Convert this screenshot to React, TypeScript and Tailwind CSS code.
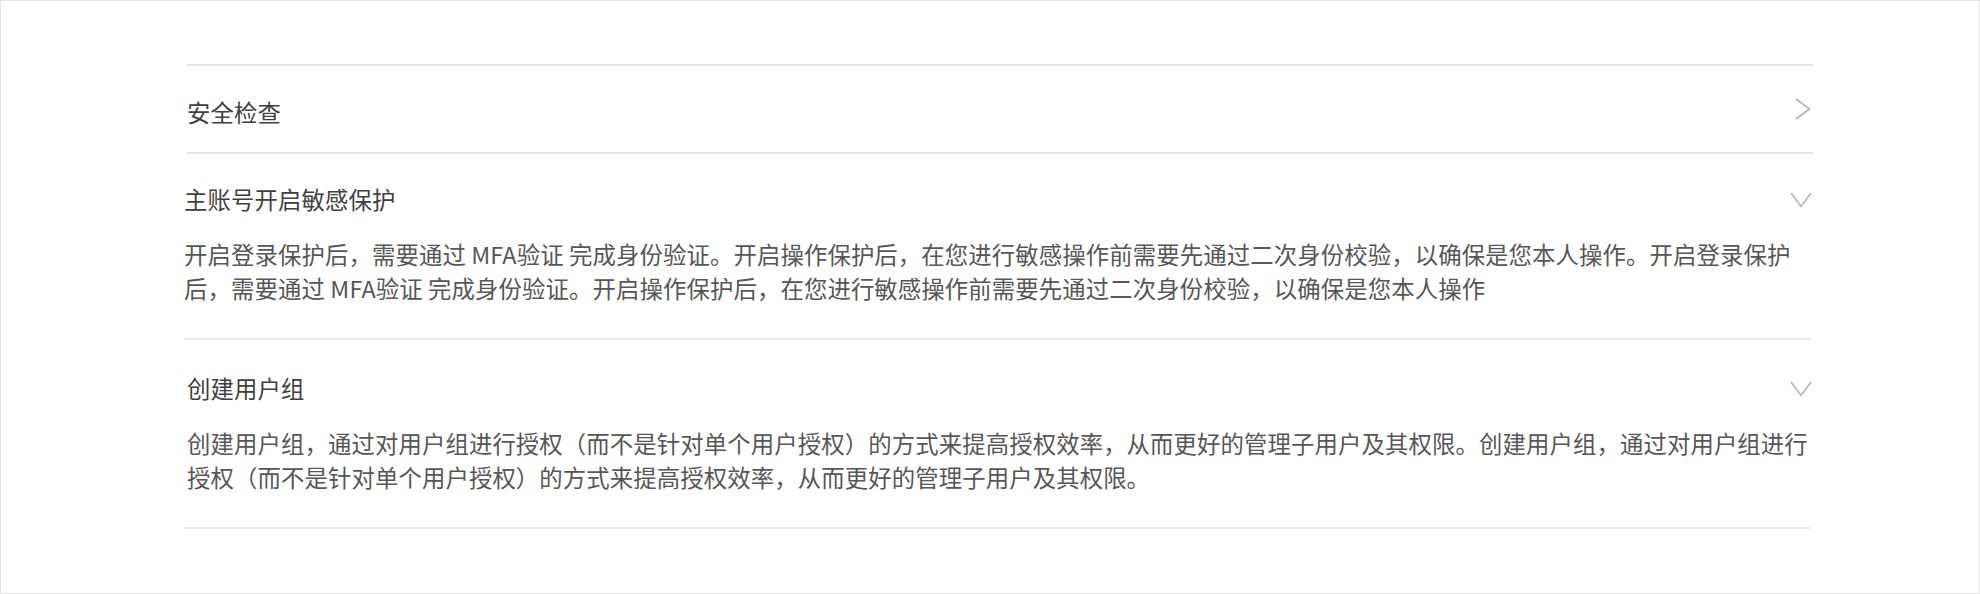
import React from "react";

const sections = [
    {
        title: "主账号开启敏感保护",
        body: "开启登录保护后，需要通过 MFA验证 完成身份验证。开启操作保护后，在您进行敏感操作前需要先通过二次身份校验，以确保是您本人操作。开启登录保护后，需要通过 MFA验证 完成身份验证。开启操作保护后，在您进行敏感操作前需要先通过二次身份校验，以确保是您本人操作",
    },
    {
        title: "创建用户组",
        body: "创建用户组，通过对用户组进行授权（而不是针对单个用户授权）的方式来提高授权效率，从而更好的管理子用户及其权限。创建用户组，通过对用户组进行授权（而不是针对单个用户授权）的方式来提高授权效率，从而更好的管理子用户及其权限。",
    },
];

function ChevronRight() {
    return (
        <svg width="16" height="22" viewBox="0 0 16 22" fill="none" className="mr-[2px]">
            <polyline points="1,1 14.5,11 1,21" stroke="#b4b4b4" strokeWidth="1.6" />
        </svg>
    );
}

function ChevronDown() {
    return (
        <svg width="22" height="16" viewBox="0 0 22 16" fill="none" className="-mr-[2px]">
            <polyline points="1,1 11,14.5 21,1" stroke="#b4b4b4" strokeWidth="1.6" />
        </svg>
    );
}

function App() {
    return (
        <div className="box-border h-[594px] w-full border border-[#e4e4e4] bg-white font-['Noto_Sans_CJK_SC','Noto_Sans',sans-serif] text-[23.4px] tracking-[0.1px]">
            <div className="ml-[183px] mr-[166px] pt-[63px]">
                {/* 安全检查 */}
                <div className="ml-[3px] flex h-[90px] items-center justify-between border-y-2 border-[#e8e8e8]">
                    <span className="pt-[6px] leading-[35px] text-[#3f3f3f]">安全检查</span>
                    <ChevronRight />
                </div>

                {/* 主账号开启敏感保护 */}
                <div className="mr-[3px] border-b-2 border-[#e8e8e8] pt-[28px] pb-[33px]">
                    <div className="flex h-[35px] items-center justify-between">
                        <span className="leading-[35px] text-[#3f3f3f]">{sections[0].title}</span>
                        <ChevronDown />
                    </div>
                    <p className="mt-[20px] leading-[34px] text-[#565656]">{sections[0].body}</p>
                </div>

                {/* 创建用户组 */}
                <div className="mr-[3px] border-b-2 border-[#e8e8e8] pt-[31px] pb-[33px]">
                    <div className="flex h-[35px] items-center justify-between pl-[3px]">
                        <span className="leading-[35px] text-[#3f3f3f]">{sections[1].title}</span>
                        <ChevronDown />
                    </div>
                    <p className="mt-[20px] pl-[3px] leading-[34px] text-[#565656]">{sections[1].body}</p>
                </div>
            </div>
        </div>
    );
}

export default App;
